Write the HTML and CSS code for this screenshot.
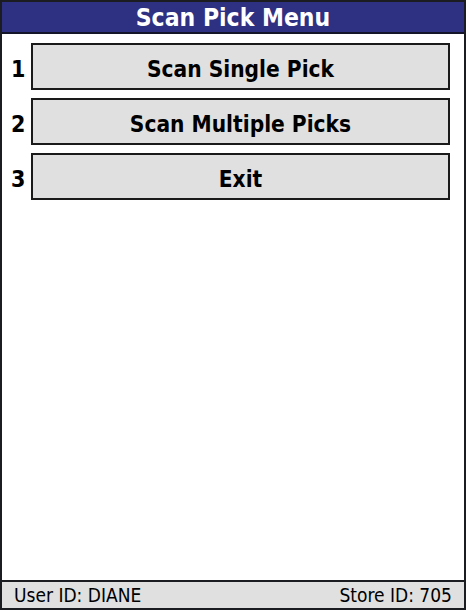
FILE: index.html
```html
<!DOCTYPE html>
<html>
<head>
<meta charset="utf-8">
<link rel="stylesheet" href="styles.css">
</head>
<body>
<div class="frame">
  <div class="title">Scan Pick Menu</div>
  <div class="menu">
    <div class="row"><span class="num">1</span><div class="btn">Scan Single Pick</div></div>
    <div class="row"><span class="num">2</span><div class="btn">Scan Multiple Picks</div></div>
    <div class="row"><span class="num">3</span><div class="btn">Exit</div></div>
  </div>
  <div class="footer"><span>User ID: DIANE</span><span>Store ID: 705</span></div>
</div>
</body>
</html>
```
FILE: styles.css
```css
html, body { margin: 0; padding: 0; background: #fff; }
.frame {
  width: 466px; height: 610px; box-sizing: border-box;
  border: 2px solid #1b1b22;
  display: flex; flex-direction: column;
  font-family: "DejaVu Sans Condensed", "DejaVu Sans", sans-serif;
}
.title {
  height: 32px; box-sizing: border-box;
  background: #2e3082; color: #fff;
  border-bottom: 2px solid #15152a;
  font-weight: bold; font-size: 24.5px; line-height: 31px;
  text-align: center;
}
.menu {
  flex: 1;
  padding: 9px 14px 0 0;
  display: flex; flex-direction: column; gap: 8px;
}
.row { display: flex; align-items: center; }
.num {
  width: 29px; box-sizing: border-box; padding-left: 9px; padding-top: 4px;
  font-weight: bold; font-size: 23px; color: #000;
}
.btn {
  flex: 1; height: 47px; box-sizing: border-box;
  border: 2px solid #1a1a1a;
  background: #e0e0e0;
  display: flex; align-items: center; justify-content: center;
  padding-top: 5px;
  font-weight: bold; font-size: 22.5px; color: #000;
}
.footer {
  height: 28px; box-sizing: border-box;
  border-top: 2px solid #1b1b22;
  background: #e0e0e0;
  display: flex; justify-content: space-between; align-items: center;
  padding: 0 12px 0 12px;
  font-size: 19px; color: #000;
}
```
